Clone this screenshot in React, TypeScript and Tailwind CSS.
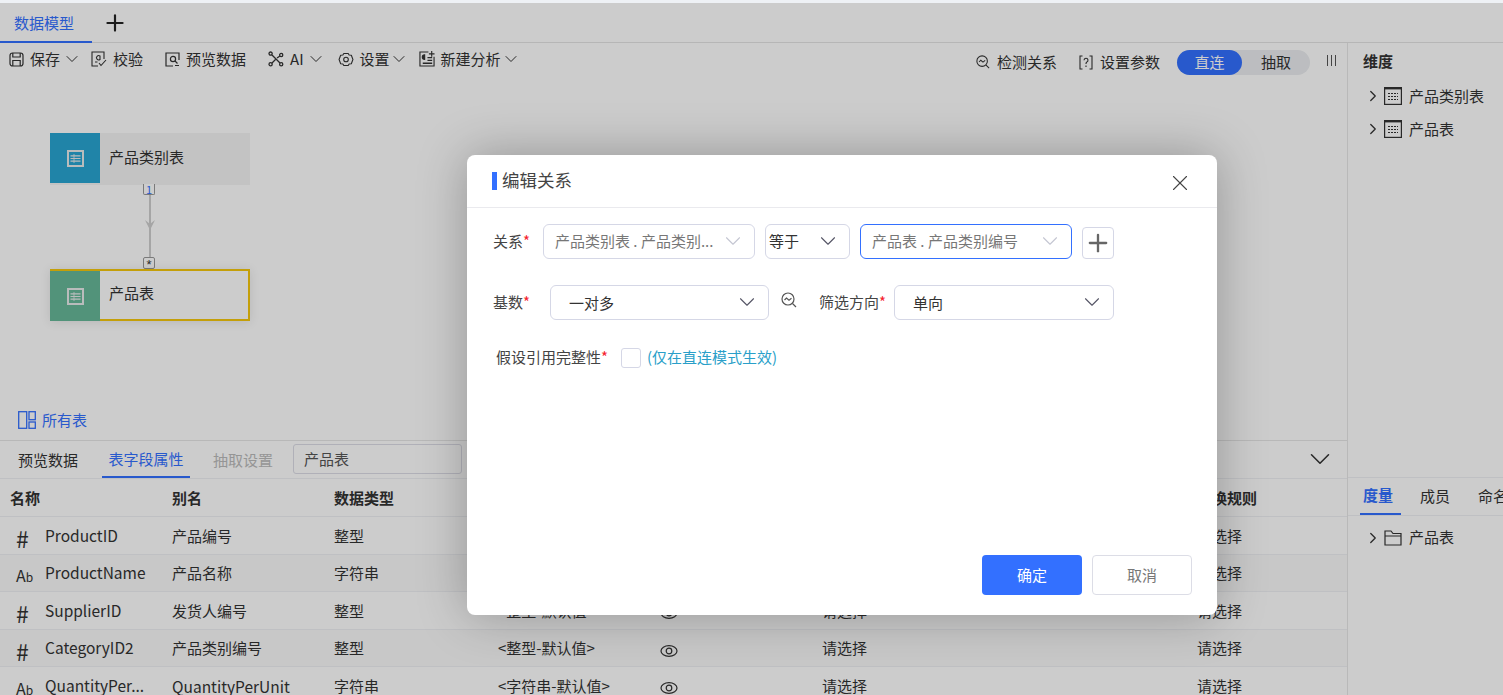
import * as React from "react";
import { ChevronDown, ChevronRight, Plus, X } from "lucide-react";

const rows = [
    { kind: "#", name: "ProductID", alias: "产品编号", type: "整型", format: "<整型-默认值>", bg: "" },
    { kind: "Ab", name: "ProductName", alias: "产品名称", type: "字符串", format: "<字符串-默认值>", bg: "bg-[#fafafa]" },
    { kind: "#", name: "SupplierID", alias: "发货人编号", type: "整型", format: "<整型-默认值>", bg: "" },
    { kind: "#", name: "CategoryID2", alias: "产品类别编号", type: "整型", format: "<整型-默认值>", bg: "bg-[#fafafa]" },
    { kind: "Ab", name: "QuantityPer...", alias: "QuantityPerUnit", type: "字符串", format: "<字符串-默认值>", bg: "" },
];

function TableIcon() {
    return (
        <svg viewBox="0 0 18 18" className="w-[18px] h-[18px]" fill="none" stroke="currentColor">
            <rect x="0.6" y="0.6" width="16.8" height="16.8" strokeWidth="1.2" />
            <path d="M0 1.2H18" strokeWidth="2.4" />
            <path d="M4 6.5H14M4 9.5H14M4 12.5H14" strokeWidth="1.1" strokeDasharray="2 1" />
        </svg>
    );
}

function NodeIcon() {
    return (
        <svg viewBox="0 0 17 17" className="w-[17px] h-[17px]" fill="none" stroke="#e8ecec">
            <rect x="1" y="1" width="15" height="15" strokeWidth="2" />
            <path d="M3.5 5.8H13.5M3.5 8.5H13.5M3.5 11.2H13.5" strokeWidth="1.2" />
            <path d="M7 4V13" strokeWidth="0.8" />
        </svg>
    );
}

function SaveIcon() {
    return (
        <svg viewBox="0 0 15 15" className="w-[15px] h-[15px]" fill="none" stroke="currentColor" strokeWidth="1.2">
            <rect x="1" y="1" width="13" height="13" rx="2.5" />
            <path d="M3.8 1V5H11.2V1M3.8 14V8.5H11.2V14" />
        </svg>
    );
}

function CheckDocIcon() {
    return (
        <svg viewBox="0 0 16 16" className="w-4 h-4" fill="none" stroke="currentColor" strokeWidth="1.1">
            <path d="M7 15H1V1H13V8" />
            <path d="M9 8.5A2.2 2.2 0 1 1 9 5V9M4 11H6.5M8 12L10 14.5L15 9" />
        </svg>
    );
}

function PreviewIcon() {
    return (
        <svg viewBox="0 0 15 15" className="w-[15px] h-[15px]" fill="none" stroke="currentColor" strokeWidth="1.2">
            <path d="M14 8V1H1V14H8" />
            <circle cx="8" cy="7" r="2.6" />
            <path d="M10 9L12.5 11.5M10 13.5H14" />
        </svg>
    );
}

function AiIcon() {
    return (
        <svg viewBox="0 0 16 16" className="w-4 h-4" fill="none" stroke="currentColor" strokeWidth="1.3">
            <circle cx="2.6" cy="2.6" r="1.6" />
            <circle cx="13.2" cy="4" r="1.6" />
            <circle cx="2.6" cy="13.2" r="1.6" />
            <circle cx="13.2" cy="13.2" r="1.6" />
            <path d="M4 4L12 12M4 12L7.5 8.5M9 7L12 5" />
        </svg>
    );
}

function GearIcon() {
    return (
        <svg viewBox="0 0 18 18" className="w-[17px] h-[17px]" fill="none" stroke="currentColor" strokeWidth="1.2">
            <path d="M6.5 2.2H11.5L12.5 4L15 4.2L16.8 9L15 13.8L12.5 14L11.5 15.8H6.5L5.5 14L3 13.8L1.2 9L3 4.2L5.5 4Z" strokeLinejoin="round" />
            <circle cx="9" cy="9" r="2.6" />
        </svg>
    );
}

function NewAnalysisIcon() {
    return (
        <svg viewBox="0 0 17 17" className="w-4 h-4" fill="none" stroke="currentColor" strokeWidth="1.2">
            <path d="M10 1H1V16H16V6" />
            <path d="M13.5 0V6M10.5 3H16.5" />
            <path d="M6 4A2.5 2.5 0 1 0 6 9Z" fill="currentColor" />
            <path d="M9 7H14M9 10H14M4 13H14" strokeWidth="1.5" />
        </svg>
    );
}

function TrendSearchIcon(props: { className?: string }) {
    return (
        <svg viewBox="0 0 16 16" className={props.className} fill="none" stroke="currentColor" strokeWidth="1.2">
            <circle cx="7" cy="7" r="6" />
            <path d="M11.5 11.5L15 15M3.5 8L5.5 6L8 8.2L10.5 6.2" />
        </svg>
    );
}

function ParamIcon() {
    return (
        <svg viewBox="0 0 14 15" className="w-[14px] h-[15px]" fill="none" stroke="currentColor" strokeWidth="1.1">
            <path d="M3.5 1H1V14H3.5M10.5 1H13V14H10.5" />
            <path d="M5 5.2A2 2 0 1 1 7.6 7.2C7 7.6 7 8 7 9M7 10.5V12" />
        </svg>
    );
}

function EyeIcon() {
    return (
        <svg viewBox="0 0 18 14" className="w-[18px] h-[14px]" fill="none" stroke="currentColor" strokeWidth="1.2">
            <ellipse cx="9" cy="7" rx="8" ry="5.4" />
            <circle cx="9" cy="7" r="2.8" />
        </svg>
    );
}

function FolderIcon() {
    return (
        <svg viewBox="0 0 18 16" className="w-[18px] h-4" fill="none" stroke="currentColor" strokeWidth="1.2">
            <path d="M1 15V1H7L9 3.5H17V15ZM1 6H17" />
        </svg>
    );
}

function ToolItem(props: { icon: React.ReactNode, label: string, chevron?: string, className?: string }) {
    return (
        <div className={"flex items-center " + (props.className ?? "")}>
            <span className="flex w-4 justify-center">{props.icon}</span>
            <span className="ml-[6px]">{props.label}</span>
            {props.chevron && <ChevronDown className={"w-5 h-5 " + props.chevron} strokeWidth={1.2} />}
        </div>
    );
}

function TreeItem(props: { label: string, folder?: boolean }) {
    return (
        <div className="flex items-center h-[33px] pl-[16px] text-[15px] text-[#333]">
            <ChevronRight className="w-[18px] h-[18px]" strokeWidth={1.7} />
            <span className="ml-[2px] w-[25px] flex">
                {props.folder ? <FolderIcon /> : <TableIcon />}
            </span>
            <span>{props.label}</span>
        </div>
    );
}

function FieldRow(props: { row: typeof rows[number] }) {
    const { row } = props;
    return (
        <div className={"shrink-0 grid grid-cols-[172px_162px_164px_162px_162px_375px_1fr] items-center h-[37.6px] pt-px border-b border-[#eff0f4] text-[15px] text-[#333] " + row.bg}>
            <div className="flex items-center min-w-0">
                <span className={row.kind === "#" ? "w-[45px] pl-4 text-[23px] leading-none pt-[6px]" : "w-[45px] pl-4 text-[16px] leading-none pt-[6px]"}>
                    {row.kind === "#" ? "#" : <>A<span className="text-xs">b</span></>}
                </span>
                <span className="pb-[1px] text-[15.5px]">{row.name}</span>
            </div>
            <div className={row.alias.startsWith("Q") ? "text-[15.5px]" : ""}>{row.alias}</div>
            <div>{row.type}</div>
            <div>{row.format}</div>
            <div className="pt-1"><EyeIcon /></div>
            <div>请选择</div>
            <div>请选择</div>
        </div>
    );
}

function TableNode(props: { name: string, color: string, className: string }) {
    return (
        <div className={"absolute left-[50px] w-[200px] h-[52px] flex text-[15px] text-[#333] " + props.className}>
            <div className={"w-[50px] h-[50px] flex items-center justify-center " + props.color}>
                <NodeIcon />
            </div>
            <div className="flex-1 pl-[9px] pb-[4px] flex items-center">{props.name}</div>
        </div>
    );
}

function Select(props: { text: string, width: string, muted?: boolean, active?: boolean, pad?: string, textPad?: string }) {
    return (
        <div className={"flex items-center justify-between h-[35px] rounded-md border bg-white text-[15px] " + props.width + " " + (props.pad ?? "pl-[11px]") + " " + (props.active ? "border-[#3370ff]" : "border-[#d5d7e6]") + " " + (props.muted ? "text-[#777]" : "text-[#333]")}>
            <span className={"truncate " + (props.textPad ?? "")}>{props.text}</span>
            <ChevronDown className={"mr-2 mb-[2px] w-[26px] h-[26px] shrink-0 " + (props.muted ? "text-[#c4c6d2]" : "text-[#556]")} strokeWidth={1} />
        </div>
    );
}

function Required(props: { text: string, className?: string }) {
    return (
        <span className={"text-[15px] text-[#444] " + (props.className ?? "")}>
            {props.text}<span className="text-[#f5222d]">*</span>
        </span>
    );
}

function RelationDialog() {
    return (
        <div className="absolute left-[467px] top-[155px] w-[750px] h-[460px] flex flex-col bg-white rounded-lg shadow-[0_0_50px_rgba(0,0,0,0.28)]">
            <div className="flex items-center h-[53px] shrink-0 border-b border-[#eaeaee] pl-[25px] pr-[24px]">
                <span className="w-[5px] h-[18px] bg-[#3370ff]" />
                <span className="ml-[5px] pb-[2px] text-[17.5px] text-[#444]">编辑关系</span>
                <X className="ml-auto mt-[3px] w-[26px] h-[26px] text-[#444]" strokeWidth={1} />
            </div>
            <div className="flex items-center mt-4 ml-[26px]">
                <Required text="关系" className="w-[50px]" />
                <Select text="产品类别表 . 产品类别..." width="w-[212px]" muted />
                <div className="ml-[10px]">
                    <Select text="等于" width="w-[85px]" pad="pl-[3px]" />
                </div>
                <div className="ml-[10px]">
                    <Select text="产品表 . 产品类别编号" width="w-[212px]" muted active />
                </div>
                <div className="ml-[10px] mt-[3px] w-[32px] h-[32px] flex items-center justify-center rounded border border-[#d5d7e6] text-[#666]">
                    <Plus className="w-[28px] h-[28px]" strokeWidth={2} />
                </div>
            </div>
            <div className="flex items-center mt-[26px] ml-[26px]">
                <Required text="基数" className="w-[57px] pb-[1px]" />
                <Select text="一对多" width="w-[219px]" pad="pl-[18px]" textPad="pt-[1px]" />
                <span className="ml-3 mb-[6px] text-[#555]">
                    <TrendSearchIcon className="w-4 h-4" />
                </span>
                <Required text="筛选方向" className="ml-[22px] w-[75px]" />
                <Select text="单向" width="w-[220px]" pad="pl-[18px]" textPad="pt-[1px]" />
            </div>
            <div className="flex items-center mt-[26px] ml-[29px]">
                <Required text="假设引用完整性" className="w-[125px] pb-[1px]" />
                <span className="w-5 h-5 rounded-[3px] border border-[#d5d7e6]" />
                <span className="ml-[6px] pb-[1px] text-[15px] text-[#2a9fc9]">(仅在直连模式生效)</span>
            </div>
            <div className="mt-auto flex justify-end gap-[10px] pr-[25px] pb-5 text-[15px]">
                <div className="w-[100px] h-10 flex items-center justify-center rounded bg-[#3370ff] text-white">确定</div>
                <div className="w-[100px] h-10 flex items-center justify-center rounded border border-[#dcdde6] text-[#777]">取消</div>
            </div>
        </div>
    );
}

export default function App() {
    return (
        <div className="relative w-[1503px] h-[695px] overflow-hidden bg-white font-['Noto_Sans_CJK_SC','Noto_Sans',sans-serif]">
            <div className="h-[3px] bg-[#eef1f5]" />
            <div className="flex items-stretch h-10 border-b border-[#e4e4e4]">
                <div className="w-[92px] h-10 pl-[14px] pt-[9px] border-b-2 border-[#3370ff] text-[15px] text-[#3370ff]">数据模型</div>
                <Plus className="ml-[10px] mt-[7px] w-[26px] h-[26px] text-[#222]" strokeWidth={2} />
            </div>
            <div className="flex h-[652px] overflow-hidden">
                <div className="w-[1347px] flex flex-col">
                    <div className="shrink-0 relative h-[398px] border-b border-[#e6e6e6]">
                        <div className="flex items-center h-[32px] pl-2 text-[15px] text-[#333]">
                            <ToolItem icon={<SaveIcon />} label="保存" chevron="ml-[2px]" />
                            <ToolItem icon={<CheckDocIcon />} label="校验" className="ml-[9px]" />
                            <ToolItem icon={<PreviewIcon />} label="预览数据" className="ml-[21px]" />
                            <ToolItem icon={<AiIcon />} label="AI" chevron="ml-[2px]" className="ml-[22px]" />
                            <ToolItem icon={<GearIcon />} label="设置" chevron="-ml-px" className="ml-[12px]" />
                            <ToolItem icon={<NewAnalysisIcon />} label="新建分析" chevron="ml-0" className="ml-[10px]" />
                            <div className="ml-auto flex items-center pt-[6px]">
                                <ToolItem icon={<TrendSearchIcon className="w-[14px] h-[14px]" />} label="检测关系" />
                                <ToolItem icon={<ParamIcon />} label="设置参数" className="ml-[21px]" />
                                <div className="ml-[17px] w-[133px] h-[25px] flex items-center rounded-full bg-[#ebedf0]">
                                    <span className="w-[65px] h-[25px] flex items-center justify-center rounded-full bg-[#3370ff] text-white">直连</span>
                                    <span className="flex-1 text-center">抽取</span>
                                </div>
                                <span className="ml-[17px] mr-[11px] mb-1 flex gap-[3px]">
                                    <i className="w-px h-[11px] bg-[#555]" />
                                    <i className="w-px h-[11px] bg-[#555]" />
                                    <i className="w-px h-[11px] bg-[#555]" />
                                </span>
                            </div>
                        </div>

                        <TableNode name="产品类别表" color="bg-[#29a6d2]" className="top-[90px] bg-[#f4f4f4]" />
                        <svg className="absolute left-[142px] top-[140px]" width="16" height="88" viewBox="0 0 16 88" fill="none">
                            <path d="M8 12V75" stroke="#cfcfcf" strokeWidth="2" />
                            <path d="M3 37L8 47L13 37L8 41Z" fill="#cfcfcf" />
                        </svg>
                        <span className="absolute left-[143px] top-[141px] w-3 h-[11px] flex items-center justify-center rounded-b-[2px] border border-t-0 border-[#999] bg-white text-[11px] leading-none text-[#3370ff]">1</span>
                        <span className="absolute left-[143px] top-[214px] w-3 h-3 flex items-center justify-center rounded-[2px] border border-[#999] bg-white font-['Liberation_Sans',sans-serif] text-[13px] leading-none pt-[2px] text-[#333]">*</span>
                        <TableNode name="产品表" color="bg-[#67b899]" className="top-[226px] bg-white border-2 border-l-0 border-[#f5c70c] shadow-[0_1px_10px_rgba(0,0,0,0.1)]" />

                        <div className="absolute left-[18px] bottom-[9px] flex items-center gap-[6px] text-[15px] text-[#3370ff]">
                            <svg viewBox="0 0 18 18" className="w-[18px] h-[18px]" fill="none" stroke="currentColor" strokeWidth="1.3">
                                <rect x="0.7" y="0.7" width="8" height="16.6" />
                                <rect x="11" y="0.7" width="6.3" height="8" />
                                <rect x="11" y="11" width="6.3" height="6.3" />
                            </svg>
                            所有表
                        </div>
                    </div>

                    <div className="shrink-0 flex items-stretch h-[38px] border-b border-[#eff0f4] text-[15px] text-[#333]">
                        <span className="ml-[18px] pt-[2px] flex items-center">预览数据</span>
                        <span className="ml-6 w-[88px] pt-[2px] flex items-center justify-center border-b-2 border-[#3370ff] text-[#3370ff]">表字段属性</span>
                        <span className="ml-[23px] pt-[2px] flex items-center text-[#bbb]">抽取设置</span>
                        <div className="ml-5 mt-[3px] w-[169px] h-[30px] flex items-center pl-[10px] rounded-[3px] border border-[#dcdde6] text-[#555]">产品表</div>
                        <ChevronDown className="ml-auto mr-[10px] mt-[1px] w-[34px] h-[34px] text-[#333]" strokeWidth={1.1} />
                    </div>

                    <div className="shrink-0 grid grid-cols-[172px_162px_164px_162px_162px_375px_1fr] items-center h-[38px] pt-px border-b border-[#eff0f4] text-[15px] font-bold text-[#333]">
                        <span className="pl-[10px]">名称</span>
                        <span>别名</span>
                        <span>数据类型</span>
                        <span>数据格式</span>
                        <span>可见</span>
                        <span>语义</span>
                        <span>转换规则</span>
                    </div>
                    {rows.map((row) => <FieldRow key={row.name} row={row} />)}
                </div>

                <div className="flex-1 min-w-0 flex flex-col border-l border-[#e8e8e8]">
                    <div className="shrink-0 h-[435px] border-b border-[#eff0f4]">
                        <div className="pl-[15px] pt-[7px] pb-[7px] text-[15px] font-bold text-[#333]">维度</div>
                        <TreeItem label="产品类别表" />
                        <TreeItem label="产品表" />
                    </div>
                    <div className="shrink-0 flex items-stretch h-[38px] border-b border-[#eff0f4] pl-3 text-[15px] text-[#333] whitespace-nowrap overflow-hidden">
                        <span className="shrink-0 w-[41px] flex items-center pl-[3px] border-b-2 border-[#3370ff] font-bold text-[#3370ff]">度量</span>
                        <span className="shrink-0 ml-[19px] flex items-center">成员</span>
                        <span className="shrink-0 ml-7 flex items-center">命名</span>
                    </div>
                    <div className="pt-[5px]">
                        <TreeItem label="产品表" folder />
                    </div>
                </div>
            </div>

            <div className="absolute inset-x-0 top-[3px] bottom-0 bg-black/20" />
            <RelationDialog />
        </div>
    );
}
